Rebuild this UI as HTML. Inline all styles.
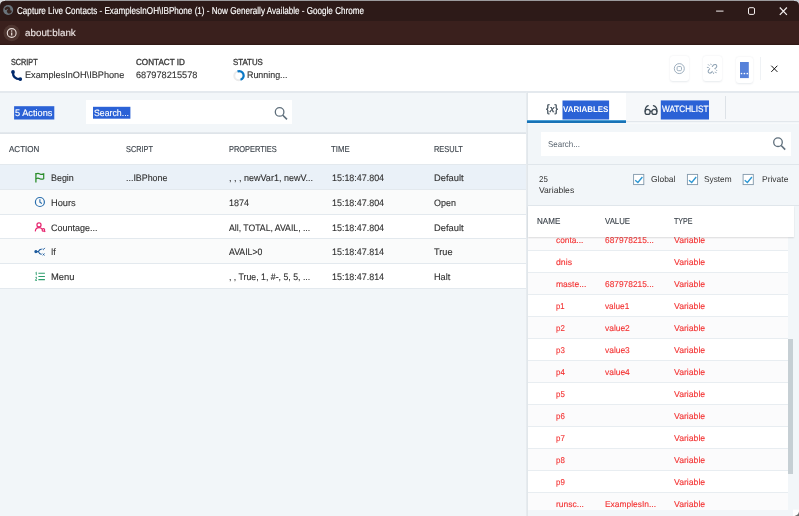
<!DOCTYPE html>
<html><head><meta charset="utf-8">
<style>
*{box-sizing:border-box;margin:0;padding:0}
html,body{width:799px;height:516px;overflow:hidden;background:#f2f6f9;font-family:"Liberation Sans",sans-serif;color:#333}
.a{position:absolute;white-space:nowrap;line-height:1}
.sel{background:#2a63d6}
svg{position:absolute;overflow:visible}
#rows{position:absolute;left:0;top:0;z-index:1}
#rhead{z-index:2}
.z3{z-index:3}
#txt{position:absolute;left:0;top:0;z-index:3;will-change:transform}
#rows{will-change:transform}
body{text-rendering:geometricPrecision}
</style></head><body>
<!-- browser chrome -->
<div class="a" style="left:0;top:0;width:799px;height:21px;background:#2d1a18"></div>
<div class="a" style="left:0;top:21px;width:799px;height:24px;background:#3a201d"></div>
<!-- app header -->
<div class="a" style="left:0;top:45px;width:799px;height:46px;background:#fff"></div>
<div class="a" style="left:0;top:91px;width:799px;height:1.5px;background:#e4e9ee"></div>
<!-- header buttons -->
<div class="a" style="left:669.6px;top:56.3px;width:19.6px;height:24.8px;background:#fff;border-radius:3px;box-shadow:0 .6px 2px rgba(40,60,90,.11)"></div>
<div class="a" style="left:702.6px;top:56.3px;width:19.4px;height:24.8px;background:#fff;border-radius:3px;box-shadow:0 .6px 2px rgba(40,60,90,.11)"></div>
<div class="a" style="left:735.7px;top:57.4px;width:17.4px;height:25.2px;background:#fff;border-radius:3px;box-shadow:0 .6px 2px rgba(40,60,90,.11)"></div>
<div class="a" style="left:760px;top:56.5px;width:1px;height:23.5px;background:#eff2f5"></div>
<!-- left toolbar -->
<div class="a" style="left:0;top:132px;width:527px;height:2px;background:linear-gradient(#e6ebef,#dce2e7)"></div>
<div class="a" style="left:86px;top:100px;width:206px;height:24px;background:#fff"></div>
<!-- left table -->
<div class="a" style="left:0;top:134px;width:527px;height:30.5px;background:#fff"></div>
<div class="a" style="left:0;top:164.5px;width:527px;height:24.75px;background:#eaf1f8"></div>
<div class="a" style="left:0;top:189.25px;width:527px;height:24.75px;background:#fafbfb"></div>
<div class="a" style="left:0;top:214px;width:527px;height:24.75px;background:#fff"></div>
<div class="a" style="left:0;top:238.75px;width:527px;height:24.75px;background:#fafbfb"></div>
<div class="a" style="left:0;top:263.5px;width:527px;height:24.75px;background:#fff"></div>
<div class="a" style="left:0;top:164px;width:527px;height:1px;background:#e3e9ee"></div>
<div class="a" style="left:0;top:188.9px;width:527px;height:1px;background:#e3e9ee"></div>
<div class="a" style="left:0;top:213.6px;width:527px;height:1px;background:#e3e9ee"></div>
<div class="a" style="left:0;top:238.4px;width:527px;height:1px;background:#e3e9ee"></div>
<div class="a" style="left:0;top:263.1px;width:527px;height:1px;background:#e3e9ee"></div>
<div class="a" style="left:0;top:287.9px;width:527px;height:1px;background:#e3e9ee"></div>
<!-- right panel -->
<div class="a" style="left:526px;top:92px;width:2px;height:424px;background:linear-gradient(90deg,#e9edf1,#dfe5e9)"></div>
<div class="a" style="left:528px;top:92.5px;width:271px;height:29px;background:#f6f8fa"></div>
<div class="a" style="left:528px;top:121.3px;width:271px;height:1.2px;background:#e2e7ec"></div>
<div class="a" style="left:528px;top:122.5px;width:271px;height:1.8px;background:#f7f9fb"></div>
<div class="a" style="left:528px;top:92.5px;width:98px;height:28px;background:#fff"></div>
<div class="a" style="left:527px;top:120px;width:99px;height:3px;background:#1872b6;border-top:.7px solid #4a9fd6"></div>
<div class="a" style="left:725px;top:96px;width:1px;height:23px;background:#dde2e7"></div>
<div class="a" style="left:541.3px;top:131.5px;width:249.5px;height:24px;background:#fff"></div>
<div class="a" style="left:528px;top:164px;width:271px;height:1px;background:#e0e6eb"></div>
<div class="a" style="left:528px;top:205px;width:271px;height:1px;background:#e0e6eb"></div>
<svg width="799" height="516" viewBox="0 0 799 516" style="left:0;top:0">
<rect x="0" y="0" width="6" height="6" fill="#d9dadd"/><rect x="793" y="0" width="6" height="6" fill="#c6ccd3"/>
<rect x="5" y="0" width="789" height="2" fill="#9b9b9d"/>
<path d="M0,9V5.6Q0,.9 4.7,.9H794.5Q799,.9 799,5.4V9Z" fill="#2d1a18"/>
<rect x="0" y="43.8" width="799" height="1" fill="#2f1815"/>
<rect x="14.1" y="106.2" width="40.2" height="13.3" fill="#2b62d6"/>
<rect x="93" y="106.8" width="37.4" height="11.9" fill="#2b62d6"/>
<rect x="562.5" y="100.5" width="46.6" height="19" fill="#2b62d6"/>
<rect x="660.8" y="100.4" width="48.2" height="19.1" fill="#2b62d6"/>
</svg>
<div id="txt">
<div class="a z3" style="left:17.00px;top:7.00px;font-size:10px;color:#ffffff;font-weight:normal;-webkit-text-stroke:.15px #fff;transform:scaleX(0.8111);transform-origin:0 0">Capture Live Contacts - ExamplesInOH\IBPhone (1) - Now Generally Available - Google Chrome</div>
<div class="a z3" style="left:25.20px;top:29.00px;font-size:9.8px;color:#ece4e3;font-weight:normal;-webkit-text-stroke:.12px #ece4e3;transform:scaleX(1.0025);transform-origin:0 0">about:blank</div>
<div class="a z3" style="left:11.20px;top:58.00px;font-size:8.8px;color:#3a3a3a;font-weight:normal;-webkit-text-stroke:.35px #3a3a3a;transform:scaleX(0.8244);transform-origin:0 0">SCRIPT</div>
<div class="a z3" style="left:135.50px;top:58.00px;font-size:8.8px;color:#3a3a3a;font-weight:normal;-webkit-text-stroke:.35px #3a3a3a;transform:scaleX(0.9235);transform-origin:0 0">CONTACT ID</div>
<div class="a z3" style="left:233.20px;top:58.00px;font-size:8.8px;color:#3a3a3a;font-weight:normal;-webkit-text-stroke:.35px #3a3a3a;transform:scaleX(0.8920);transform-origin:0 0">STATUS</div>
<div class="a z3" style="left:25.00px;top:71.00px;font-size:9.3px;color:#303030;font-weight:normal;-webkit-text-stroke:.12px #303030;transform:scaleX(0.9853);transform-origin:0 0">ExamplesInOH\IBPhone</div>
<div class="a z3" style="left:135.50px;top:71.00px;font-size:9.3px;color:#303030;font-weight:normal;-webkit-text-stroke:.12px #303030;transform:scaleX(0.9896);transform-origin:0 0">687978215578</div>
<div class="a z3" style="left:247.20px;top:71.00px;font-size:9.3px;color:#303030;font-weight:normal;-webkit-text-stroke:.12px #303030;transform:scaleX(0.9554);transform-origin:0 0">Running...</div>
<div class="a z3" style="left:14.80px;top:109.00px;font-size:9.3px;color:#fff;font-weight:normal;-webkit-text-stroke:.12px #fff;transform:scaleX(0.9911);transform-origin:0 0">5 Actions</div>
<div class="a z3" style="left:93.80px;top:109.00px;font-size:9.3px;color:#fff;font-weight:normal;-webkit-text-stroke:.12px #fff;transform:scaleX(0.9404);transform-origin:0 0">Search...</div>
<div class="a z3" style="left:563.40px;top:105.00px;font-size:8.3px;color:#fff;font-weight:bold;transform:scaleX(0.9593);transform-origin:0 0">VARIABLES</div>
<div class="a z3" style="left:661.80px;top:105.00px;font-size:9.2px;color:#fff;font-weight:normal;-webkit-text-stroke:.2px #fff;transform:scaleX(0.8912);transform-origin:0 0">WATCHLIST</div>
<div class="a z3" style="left:9.20px;top:145.00px;font-size:8.6px;color:#3f464e;font-weight:normal;-webkit-text-stroke:.15px #3f464e;transform:scaleX(0.9332);transform-origin:0 0">ACTION</div>
<div class="a z3" style="left:125.60px;top:145.00px;font-size:8.6px;color:#3f464e;font-weight:normal;-webkit-text-stroke:.15px #3f464e;transform:scaleX(0.8567);transform-origin:0 0">SCRIPT</div>
<div class="a z3" style="left:228.80px;top:145.00px;font-size:8.6px;color:#3f464e;font-weight:normal;-webkit-text-stroke:.15px #3f464e;transform:scaleX(0.8652);transform-origin:0 0">PROPERTIES</div>
<div class="a z3" style="left:331.40px;top:145.00px;font-size:8.6px;color:#3f464e;font-weight:normal;-webkit-text-stroke:.15px #3f464e;transform:scaleX(0.9059);transform-origin:0 0">TIME</div>
<div class="a z3" style="left:433.80px;top:145.00px;font-size:8.6px;color:#3f464e;font-weight:normal;-webkit-text-stroke:.15px #3f464e;transform:scaleX(0.8654);transform-origin:0 0">RESULT</div>
<div class="a z3" style="left:51.30px;top:174.00px;font-size:9.3px;color:#303030;font-weight:normal;-webkit-text-stroke:.12px #303030;transform:scaleX(0.9587);transform-origin:0 0">Begin</div>
<div class="a z3" style="left:126.20px;top:174.00px;font-size:9.3px;color:#303030;font-weight:normal;-webkit-text-stroke:.12px #303030;transform:scaleX(0.9534);transform-origin:0 0">...IBPhone</div>
<div class="a z3" style="left:228.80px;top:174.00px;font-size:9.3px;color:#303030;font-weight:normal;-webkit-text-stroke:.12px #303030;transform:scaleX(0.9686);transform-origin:0 0">, , , newVar1, newV...</div>
<div class="a z3" style="left:331.60px;top:174.00px;font-size:9.3px;color:#303030;font-weight:normal;-webkit-text-stroke:.12px #303030;transform:scaleX(0.9595);transform-origin:0 0">15:18:47.804</div>
<div class="a z3" style="left:433.70px;top:174.00px;font-size:9.3px;color:#303030;font-weight:normal;-webkit-text-stroke:.12px #303030;transform:scaleX(1.0078);transform-origin:0 0">Default</div>
<div class="a z3" style="left:51.30px;top:199.00px;font-size:9.3px;color:#303030;font-weight:normal;-webkit-text-stroke:.12px #303030;transform:scaleX(0.9955);transform-origin:0 0">Hours</div>
<div class="a z3" style="left:228.80px;top:199.00px;font-size:9.3px;color:#303030;font-weight:normal;-webkit-text-stroke:.12px #303030;transform:scaleX(0.9668);transform-origin:0 0">1874</div>
<div class="a z3" style="left:331.60px;top:199.00px;font-size:9.3px;color:#303030;font-weight:normal;-webkit-text-stroke:.12px #303030;transform:scaleX(0.9595);transform-origin:0 0">15:18:47.804</div>
<div class="a z3" style="left:433.70px;top:199.00px;font-size:9.3px;color:#303030;font-weight:normal;-webkit-text-stroke:.12px #303030;transform:scaleX(0.9626);transform-origin:0 0">Open</div>
<div class="a z3" style="left:51.30px;top:224.00px;font-size:9.3px;color:#303030;font-weight:normal;-webkit-text-stroke:.12px #303030;transform:scaleX(0.9672);transform-origin:0 0">Countage...</div>
<div class="a z3" style="left:228.80px;top:224.00px;font-size:9.3px;color:#303030;font-weight:normal;-webkit-text-stroke:.12px #303030;transform:scaleX(0.9335);transform-origin:0 0">All, TOTAL, AVAIL, ...</div>
<div class="a z3" style="left:331.60px;top:224.00px;font-size:9.3px;color:#303030;font-weight:normal;-webkit-text-stroke:.12px #303030;transform:scaleX(0.9595);transform-origin:0 0">15:18:47.804</div>
<div class="a z3" style="left:433.70px;top:224.00px;font-size:9.3px;color:#303030;font-weight:normal;-webkit-text-stroke:.12px #303030;transform:scaleX(1.0078);transform-origin:0 0">Default</div>
<div class="a z3" style="left:51.30px;top:248.00px;font-size:9.3px;color:#303030;font-weight:normal;-webkit-text-stroke:.12px #303030;transform:scaleX(0.9088);transform-origin:0 0">If</div>
<div class="a z3" style="left:228.80px;top:248.00px;font-size:9.3px;color:#303030;font-weight:normal;-webkit-text-stroke:.12px #303030;transform:scaleX(0.9388);transform-origin:0 0">AVAIL&gt;0</div>
<div class="a z3" style="left:331.60px;top:248.00px;font-size:9.3px;color:#303030;font-weight:normal;-webkit-text-stroke:.12px #303030;transform:scaleX(0.9595);transform-origin:0 0">15:18:47.814</div>
<div class="a z3" style="left:433.70px;top:248.00px;font-size:9.3px;color:#303030;font-weight:normal;-webkit-text-stroke:.12px #303030;transform:scaleX(0.9850);transform-origin:0 0">True</div>
<div class="a z3" style="left:51.30px;top:273.00px;font-size:9.3px;color:#303030;font-weight:normal;-webkit-text-stroke:.12px #303030;transform:scaleX(1.0101);transform-origin:0 0">Menu</div>
<div class="a z3" style="left:228.80px;top:273.00px;font-size:9.3px;color:#303030;font-weight:normal;-webkit-text-stroke:.12px #303030;transform:scaleX(0.9409);transform-origin:0 0">, , True, 1, #-, 5, 5, ...</div>
<div class="a z3" style="left:331.60px;top:273.00px;font-size:9.3px;color:#303030;font-weight:normal;-webkit-text-stroke:.12px #303030;transform:scaleX(0.9595);transform-origin:0 0">15:18:47.814</div>
<div class="a z3" style="left:433.70px;top:273.00px;font-size:9.3px;color:#303030;font-weight:normal;-webkit-text-stroke:.12px #303030;transform:scaleX(0.9851);transform-origin:0 0">Halt</div>
<div class="a z3" style="left:548.30px;top:140.00px;font-size:8.5px;color:#5a6570;font-weight:normal;transform:scaleX(0.9374);transform-origin:0 0">Search...</div>
<div class="a z3" style="left:538.80px;top:175.00px;font-size:8.5px;color:#333;font-weight:normal;transform:scaleX(0.9294);transform-origin:0 0">25</div>
<div class="a z3" style="left:538.80px;top:186.00px;font-size:8.5px;color:#333;font-weight:normal;transform:scaleX(1.0111);transform-origin:0 0">Variables</div>
<div class="a z3" style="left:651.20px;top:175.00px;font-size:8.5px;color:#333;font-weight:normal;transform:scaleX(0.9928);transform-origin:0 0">Global</div>
<div class="a z3" style="left:704.40px;top:175.00px;font-size:8.5px;color:#333;font-weight:normal;transform:scaleX(0.9738);transform-origin:0 0">System</div>
<div class="a z3" style="left:761.60px;top:175.00px;font-size:8.5px;color:#333;font-weight:normal;transform:scaleX(0.9974);transform-origin:0 0">Private</div>
<div class="a z3" style="left:537.00px;top:217.00px;font-size:8.6px;color:#3f464e;font-weight:normal;-webkit-text-stroke:.15px #3f464e;transform:scaleX(0.9379);transform-origin:0 0">NAME</div>
<div class="a z3" style="left:605.30px;top:217.00px;font-size:8.6px;color:#3f464e;font-weight:normal;-webkit-text-stroke:.15px #3f464e;transform:scaleX(0.9112);transform-origin:0 0">VALUE</div>
<div class="a z3" style="left:674.20px;top:217.00px;font-size:8.6px;color:#3f464e;font-weight:normal;-webkit-text-stroke:.15px #3f464e;transform:scaleX(0.8239);transform-origin:0 0">TYPE</div>
</div>

<div id="rows">
<div class="a" style="left:528px;top:228px;width:260px;height:282px;background:#e8edf1"></div>
<div class="a" style="left:528px;top:229px;width:260px;height:21px;background:#fbfbfc"></div>
<div class="a" style="left:528px;top:251px;width:260px;height:21px;background:#ffffff"></div>
<div class="a" style="left:528px;top:273px;width:260px;height:21px;background:#fbfbfc"></div>
<div class="a" style="left:528px;top:295px;width:260px;height:21px;background:#ffffff"></div>
<div class="a" style="left:528px;top:317px;width:260px;height:21px;background:#fbfbfc"></div>
<div class="a" style="left:528px;top:339px;width:260px;height:21px;background:#ffffff"></div>
<div class="a" style="left:528px;top:361px;width:260px;height:21px;background:#fbfbfc"></div>
<div class="a" style="left:528px;top:383px;width:260px;height:21px;background:#ffffff"></div>
<div class="a" style="left:528px;top:405px;width:260px;height:21px;background:#fbfbfc"></div>
<div class="a" style="left:528px;top:427px;width:260px;height:21px;background:#ffffff"></div>
<div class="a" style="left:528px;top:449px;width:260px;height:21px;background:#fbfbfc"></div>
<div class="a" style="left:528px;top:471px;width:260px;height:21px;background:#ffffff"></div>
<div class="a" style="left:528px;top:493px;width:260px;height:21px;background:#fbfbfc"></div>
<div class="a z3" style="left:556.00px;top:236.00px;font-size:8.5px;color:#f33232;font-weight:normal;-webkit-text-stroke:.12px #f33232;transform:scaleX(0.9788);transform-origin:0 0">conta...</div>
<div class="a z3" style="left:605.20px;top:236.00px;font-size:8.5px;color:#f33232;font-weight:normal;-webkit-text-stroke:.12px #f33232;transform:scaleX(0.9831);transform-origin:0 0">687978215...</div>
<div class="a z3" style="left:673.90px;top:236.00px;font-size:8.5px;color:#f33232;font-weight:normal;-webkit-text-stroke:.12px #f33232;transform:scaleX(1.0209);transform-origin:0 0">Variable</div>
<div class="a z3" style="left:556.00px;top:258.00px;font-size:8.5px;color:#f33232;font-weight:normal;-webkit-text-stroke:.12px #f33232;transform:scaleX(1.0261);transform-origin:0 0">dnis</div>
<div class="a z3" style="left:673.90px;top:258.00px;font-size:8.5px;color:#f33232;font-weight:normal;-webkit-text-stroke:.12px #f33232;transform:scaleX(1.0209);transform-origin:0 0">Variable</div>
<div class="a z3" style="left:556.00px;top:280.00px;font-size:8.5px;color:#f33232;font-weight:normal;-webkit-text-stroke:.12px #f33232;transform:scaleX(1.0022);transform-origin:0 0">maste...</div>
<div class="a z3" style="left:605.20px;top:280.00px;font-size:8.5px;color:#f33232;font-weight:normal;-webkit-text-stroke:.12px #f33232;transform:scaleX(0.9831);transform-origin:0 0">687978215...</div>
<div class="a z3" style="left:673.90px;top:280.00px;font-size:8.5px;color:#f33232;font-weight:normal;-webkit-text-stroke:.12px #f33232;transform:scaleX(1.0209);transform-origin:0 0">Variable</div>
<div class="a z3" style="left:556.00px;top:302.00px;font-size:8.5px;color:#f33232;font-weight:normal;-webkit-text-stroke:.12px #f33232;transform:scaleX(0.9083);transform-origin:0 0">p1</div>
<div class="a z3" style="left:605.20px;top:302.00px;font-size:8.5px;color:#f33232;font-weight:normal;-webkit-text-stroke:.12px #f33232;transform:scaleX(0.9696);transform-origin:0 0">value1</div>
<div class="a z3" style="left:673.90px;top:302.00px;font-size:8.5px;color:#f33232;font-weight:normal;-webkit-text-stroke:.12px #f33232;transform:scaleX(1.0209);transform-origin:0 0">Variable</div>
<div class="a z3" style="left:556.00px;top:324.00px;font-size:8.5px;color:#f33232;font-weight:normal;-webkit-text-stroke:.12px #f33232;transform:scaleX(0.9294);transform-origin:0 0">p2</div>
<div class="a z3" style="left:605.20px;top:324.00px;font-size:8.5px;color:#f33232;font-weight:normal;-webkit-text-stroke:.12px #f33232;transform:scaleX(0.9900);transform-origin:0 0">value2</div>
<div class="a z3" style="left:673.90px;top:324.00px;font-size:8.5px;color:#f33232;font-weight:normal;-webkit-text-stroke:.12px #f33232;transform:scaleX(1.0209);transform-origin:0 0">Variable</div>
<div class="a z3" style="left:556.00px;top:346.00px;font-size:8.5px;color:#f33232;font-weight:normal;-webkit-text-stroke:.12px #f33232;transform:scaleX(0.9294);transform-origin:0 0">p3</div>
<div class="a z3" style="left:605.20px;top:346.00px;font-size:8.5px;color:#f33232;font-weight:normal;-webkit-text-stroke:.12px #f33232;transform:scaleX(0.9900);transform-origin:0 0">value3</div>
<div class="a z3" style="left:673.90px;top:346.00px;font-size:8.5px;color:#f33232;font-weight:normal;-webkit-text-stroke:.12px #f33232;transform:scaleX(1.0209);transform-origin:0 0">Variable</div>
<div class="a z3" style="left:556.00px;top:368.00px;font-size:8.5px;color:#f33232;font-weight:normal;-webkit-text-stroke:.12px #f33232;transform:scaleX(0.9294);transform-origin:0 0">p4</div>
<div class="a z3" style="left:605.20px;top:368.00px;font-size:8.5px;color:#f33232;font-weight:normal;-webkit-text-stroke:.12px #f33232;transform:scaleX(0.9900);transform-origin:0 0">value4</div>
<div class="a z3" style="left:673.90px;top:368.00px;font-size:8.5px;color:#f33232;font-weight:normal;-webkit-text-stroke:.12px #f33232;transform:scaleX(1.0209);transform-origin:0 0">Variable</div>
<div class="a z3" style="left:556.00px;top:390.00px;font-size:8.5px;color:#f33232;font-weight:normal;-webkit-text-stroke:.12px #f33232;transform:scaleX(0.9294);transform-origin:0 0">p5</div>
<div class="a z3" style="left:673.90px;top:390.00px;font-size:8.5px;color:#f33232;font-weight:normal;-webkit-text-stroke:.12px #f33232;transform:scaleX(1.0209);transform-origin:0 0">Variable</div>
<div class="a z3" style="left:556.00px;top:412.00px;font-size:8.5px;color:#f33232;font-weight:normal;-webkit-text-stroke:.12px #f33232;transform:scaleX(0.9294);transform-origin:0 0">p6</div>
<div class="a z3" style="left:673.90px;top:412.00px;font-size:8.5px;color:#f33232;font-weight:normal;-webkit-text-stroke:.12px #f33232;transform:scaleX(1.0209);transform-origin:0 0">Variable</div>
<div class="a z3" style="left:556.00px;top:434.00px;font-size:8.5px;color:#f33232;font-weight:normal;-webkit-text-stroke:.12px #f33232;transform:scaleX(0.9294);transform-origin:0 0">p7</div>
<div class="a z3" style="left:673.90px;top:434.00px;font-size:8.5px;color:#f33232;font-weight:normal;-webkit-text-stroke:.12px #f33232;transform:scaleX(1.0209);transform-origin:0 0">Variable</div>
<div class="a z3" style="left:556.00px;top:456.00px;font-size:8.5px;color:#f33232;font-weight:normal;-webkit-text-stroke:.12px #f33232;transform:scaleX(0.9294);transform-origin:0 0">p8</div>
<div class="a z3" style="left:673.90px;top:456.00px;font-size:8.5px;color:#f33232;font-weight:normal;-webkit-text-stroke:.12px #f33232;transform:scaleX(1.0209);transform-origin:0 0">Variable</div>
<div class="a z3" style="left:556.00px;top:478.00px;font-size:8.5px;color:#f33232;font-weight:normal;-webkit-text-stroke:.12px #f33232;transform:scaleX(0.9294);transform-origin:0 0">p9</div>
<div class="a z3" style="left:673.90px;top:478.00px;font-size:8.5px;color:#f33232;font-weight:normal;-webkit-text-stroke:.12px #f33232;transform:scaleX(1.0209);transform-origin:0 0">Variable</div>
<div class="a z3" style="left:556.00px;top:500.00px;font-size:8.5px;color:#f33232;font-weight:normal;-webkit-text-stroke:.12px #f33232;transform:scaleX(1.0000);transform-origin:0 0">runsc...</div>
<div class="a z3" style="left:605.20px;top:500.00px;font-size:8.5px;color:#f33232;font-weight:normal;-webkit-text-stroke:.12px #f33232;transform:scaleX(0.9900);transform-origin:0 0">ExamplesIn...</div>
<div class="a z3" style="left:673.90px;top:500.00px;font-size:8.5px;color:#f33232;font-weight:normal;-webkit-text-stroke:.12px #f33232;transform:scaleX(1.0209);transform-origin:0 0">Variable</div>
</div>
<div class="a" id="rhead" style="left:528px;top:206px;width:266px;height:30.5px;background:#fff;box-shadow:0 1px 1.5px rgba(0,0,0,.13)"></div>
<div class="a" style="left:788px;top:339px;width:5.3px;height:134.5px;background:#c6cfd4;z-index:3"></div>
<div class="a" style="left:528px;top:509.7px;width:271px;height:7px;background:#f2f6f9;z-index:3"></div>
<svg width="799" height="516" viewBox="0 0 799 516" style="left:0;top:0;z-index:4" fill="none">
<!-- globe favicon -->
<circle cx="8.2" cy="10" r="5" fill="#69747c"/>
<path d="M5.8,8.8Q7.2,7 8.8,8.2Q9.8,9.6 8.4,10.6Q7.4,11.6 8.8,12.4Q10,12.6 10.6,11.4" stroke="#35231f" stroke-width="2.3" fill="none" stroke-linecap="round"/>
<!-- info icon -->
<circle cx="11.7" cy="33" r="8.2" fill="#4d342f"/>
<circle cx="11.7" cy="33" r="4.4" stroke="#eadfdb" stroke-width="1.1"/>
<circle cx="11.7" cy="30.9" r=".75" fill="#eadfdb"/>
<path d="M11.7,32.4V35.4" stroke="#eadfdb" stroke-width="1.25"/>
<!-- window controls -->
<path d="M716.1,11.1H723.5" stroke="#f3eeee" stroke-width="1"/>
<rect x="748.5" y="7.7" width="6" height="6.7" rx="1.3" stroke="#f3eeee" stroke-width="1"/>
<path d="M779.8,7.5L786.9,14.8M786.9,7.5L779.8,14.8" stroke="#f3eeee" stroke-width="1.2"/>
<!-- phone -->
<path d="M12.9,72.2Q12.9,78.9 20.1,79.2" stroke="#00296b" stroke-width="2.3" stroke-linecap="round"/>
<circle cx="13" cy="71.9" r="1.85" fill="#00296b"/><circle cx="20.3" cy="79.1" r="1.85" fill="#00296b"/>
<!-- spinner -->
<circle cx="238.65" cy="75.8" r="4.4" stroke="#ebebeb" stroke-width="2"/>
<path d="M237.5,71.55A4.4,4.4 0 1 1 240.5,79.8" stroke="#0a78c6" stroke-width="2.2"/>
<!-- left search magnifier -->
<circle cx="279.6" cy="111.9" r="4.3" stroke="#5f6f7c" stroke-width="1.3"/>
<path d="M282.8,115.2L287,119.4" stroke="#5f6f7c" stroke-width="1.6"/>
<!-- right search magnifier -->
<circle cx="778" cy="142.2" r="4.3" stroke="#5f6f7c" stroke-width="1.3"/>
<path d="M781.2,145.5L785.2,149.6" stroke="#5f6f7c" stroke-width="1.6"/>
<!-- header button icons -->
<circle cx="679.3" cy="68.6" r="5" stroke="#93a6b7" stroke-width=".9"/>
<rect x="677.1" y="66.5" width="4.4" height="4.2" rx="1.2" stroke="#93a6b7" stroke-width=".9"/>
<g stroke="#8fa2b3" stroke-width="1.05" stroke-linecap="round" stroke-linejoin="round">
<path d="M712.3,66.5Q713.5,64.2 715.5,64.6Q717.4,65.4 716.5,67.3L714.9,68.7"/>
<path d="M709.7,68.7L708.4,70.5Q707.6,72.5 709.5,73.1Q711.1,73.4 712.2,71.4"/>
<path d="M708.3,64.6L709.2,65.5M710.6,64.2L711.3,64.5M707.3,67.4L708.4,67.5M716.1,69.9L716.8,70.6M715.1,72.2L716.3,72.6M713.1,72.5L713.6,73.6" stroke-width=".85"/>
</g>
<!-- more button -->
<rect x="740" y="62" width="8.8" height="16.1" fill="#5681d9"/>
<circle cx="741.5" cy="73.5" r=".85" fill="#fff"/><circle cx="744.4" cy="73.5" r=".85" fill="#fff"/><circle cx="747.3" cy="73.5" r=".85" fill="#fff"/>
<!-- close X -->
<path d="M771.3,65.7L777.4,71.9M777.4,65.7L771.3,71.9" stroke="#111" stroke-width="1"/>
<!-- glasses -->
<g stroke="#3b4853" stroke-width="1.25">
<circle cx="647.6" cy="111.9" r="2.55"/><circle cx="654.4" cy="111.9" r="2.55"/>
<path d="M650.1,111.4H651.9"/>
<path d="M645.2,111.4Q645,106.6 648.2,105.6M656.9,111.4Q657.2,106.6 653.4,105.6" stroke-linecap="round"/>
</g>
<!-- checkboxes -->
<g>
<rect x="633.6" y="174.4" width="10.2" height="10.2" fill="#fff" stroke="#8097aa" stroke-width=".9"/>
<rect x="687.4" y="174.4" width="10.2" height="10.2" fill="#fff" stroke="#8097aa" stroke-width=".9"/>
<rect x="743.1" y="174.4" width="10.2" height="10.2" fill="#fff" stroke="#8097aa" stroke-width=".9"/>
<path d="M635.2,180.2L637.9,182.5L642.4,177" stroke="#2d97d3" stroke-width="1.35"/>
<path d="M689,180.2L691.7,182.5L696.2,177" stroke="#2d97d3" stroke-width="1.35"/>
<path d="M744.7,180.2L747.4,182.5L751.9,177" stroke="#2d97d3" stroke-width="1.35"/>
</g>
<!-- row icons -->
<path d="M35.9,173V182.4" stroke="#2a8c2a" stroke-width="1.3"/>
<path d="M36,173.9Q38,172.9 39.8,173.9T43.7,173.9V178.7Q41.8,179.7 39.8,178.7T36,178.7" stroke="#2a8c2a" stroke-width="1.2"/>
<circle cx="39.9" cy="202" r="4.5" stroke="#2a6ead" stroke-width="1.2"/>
<path d="M39.9,199.2V202.2L41.9,203.4" stroke="#2a6ead" stroke-width="1.15"/>
<g stroke="#e6246e" stroke-width="1.2">
<circle cx="39" cy="224.9" r="2.05"/>
<path d="M35.3,231.4Q35.6,227.7 39,227.7Q41.2,227.7 42,229.1"/>
<circle cx="43.4" cy="229.9" r="1.25"/><path d="M44.3,230.9L45.2,231.9"/>
</g>
<g stroke="#1e5c9e" stroke-width="1.2">
<circle cx="35.9" cy="251.6" r="1" fill="#1e5c9e"/>
<path d="M36.6,251.6H38.4Q39.4,249.2 41.8,249M38.4,251.6Q39.4,254.2 41.6,254.4"/>
<path d="M42.6,249L43.3,249.7L44.8,247.9" stroke-width="1"/>
<path d="M42.7,253.6L44.5,255.4M44.5,253.6L42.7,255.4" stroke-width="1"/>
</g>
<g stroke="#2f9e6e" stroke-width="1.1">
<path d="M38.4,273.3H44.9M38.4,276.5H44.9M38.4,279.6H44.9"/>
<path d="M35.6,272.8L36.3,272.2V275.2M35.4,277.4Q36.9,276.6 36.6,278.2L35.4,280.4H37" stroke-width=".9"/>
</g>
<!-- resize corner -->
<rect x="793" y="509.7" width="6" height="6.3" fill="#fff"/>
<path d="M799,511.6Q798.4,515.2 794.6,516H799Z" fill="#4a4a4a" opacity=".8"/>
</svg>
<div class="a z3" style="will-change:transform;left:546.2px;top:103.8px;font-size:10.6px;color:#3c4a56;letter-spacing:.1px;-webkit-text-stroke:.3px #3c4a56">{<i style="font-family:'Liberation Serif',serif;font-size:10.6px">x</i>}</div>


</body></html>
